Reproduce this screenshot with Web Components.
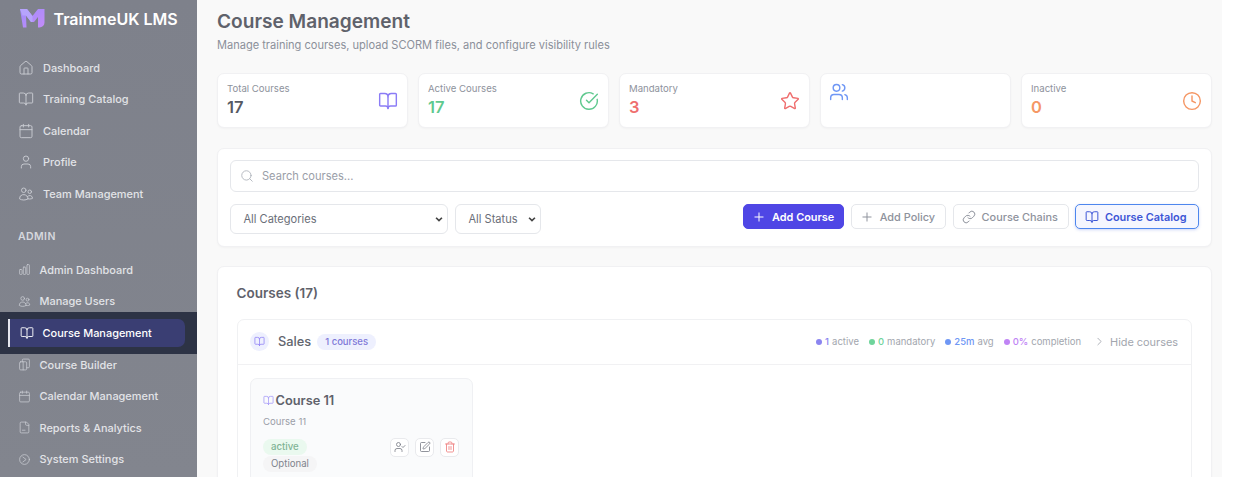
<!DOCTYPE html>
<html lang="en">
<head>
<meta charset="utf-8">
<title>Course Management</title>
<style>
html,body{margin:0;height:477px;overflow:hidden;background:#fff;font-family:Inter,"Liberation Sans",sans-serif;}
</style>
</head>
<body>
<lms-app>
  <lms-sidebar slot="side">
    <lms-nav icon="house">Dashboard</lms-nav>
    <lms-nav icon="book">Training Catalog</lms-nav>
    <lms-nav icon="calendar">Calendar</lms-nav>
    <lms-nav icon="user">Profile</lms-nav>
    <lms-nav icon="husers">Team Management</lms-nav>
    <lms-nav-head>ADMIN</lms-nav-head>
    <lms-nav sub icon="chart">Admin Dashboard</lms-nav>
    <lms-nav sub icon="husers">Manage Users</lms-nav>
    <lms-nav sub active icon="book">Course Management</lms-nav>
    <lms-nav sub icon="copy">Course Builder</lms-nav>
    <lms-nav sub icon="calendar">Calendar Management</lms-nav>
    <lms-nav sub icon="file">Reports &amp; Analytics</lms-nav>
    <lms-nav sub icon="gear">System Settings</lms-nav>
  </lms-sidebar>
  <lms-page slot="main" heading="Course Management" sub="Manage training courses, upload SCORM files, and configure visibility rules">
    <lms-stats>
      <lms-stat label="Total Courses" value="17" icon="book" color="#8b7cf6" vcolor="#565963"></lms-stat>
      <lms-stat label="Active Courses" value="17" icon="check" color="#5fc98f" vcolor="#5fc98f"></lms-stat>
      <lms-stat label="Mandatory" value="3" icon="star" color="#ef6f6f" vcolor="#ef6f6f"></lms-stat>
      <lms-stat top icon="users" color="#6f97f5"></lms-stat>
      <lms-stat label="Inactive" value="0" icon="clock" color="#f59765" vcolor="#f59765"></lms-stat>
    </lms-stats>
    <lms-filters>
      <lms-button slot="actions" variant="primary" icon="plus">Add Course</lms-button>
      <lms-button slot="actions" icon="plus">Add Policy</lms-button>
      <lms-button slot="actions" icon="link">Course Chains</lms-button>
      <lms-button slot="actions" variant="focus" icon="book">Course Catalog</lms-button>
    </lms-filters>
    <lms-courses heading="Courses (17)">
      <lms-group name="Sales" count="1 courses">
        <lms-course name="Course 11" desc="Course 11"></lms-course>
      </lms-group>
    </lms-courses>
  </lms-page>
</lms-app>
<script>
const ICONS={
 house:'<path d="M15 21v-8a1 1 0 0 0-1-1h-4a1 1 0 0 0-1 1v8"/><path d="M3 10a2 2 0 0 1 .709-1.528l7-5.999a2 2 0 0 1 2.582 0l7 5.999A2 2 0 0 1 21 10v9a2 2 0 0 1-2 2H5a2 2 0 0 1-2-2z"/>',
 book:'<path d="M12 7v14"/><path d="M3 18a1 1 0 0 1-1-1V4a1 1 0 0 1 1-1h5a4 4 0 0 1 4 4 4 4 0 0 1 4-4h5a1 1 0 0 1 1 1v13a1 1 0 0 1-1 1h-6a3 3 0 0 0-3 3 3 3 0 0 0-3-3z"/>',
 calendar:'<path d="M8 2v4"/><path d="M16 2v4"/><rect width="18" height="18" x="3" y="4" rx="2"/><path d="M3 10h18"/>',
 user:'<path d="M19 21v-2a4 4 0 0 0-4-4H9a4 4 0 0 0-4 4v2"/><circle cx="12" cy="7" r="4"/>',
 users:'<path d="M16 21v-2a4 4 0 0 0-4-4H6a4 4 0 0 0-4 4v2"/><circle cx="9" cy="7" r="4"/><path d="M22 21v-2a4 4 0 0 0-3-3.87"/><path d="M16 3.13a4 4 0 0 1 0 7.75"/>',
 husers:'<path d="M15 19.128a9.38 9.38 0 0 0 2.625.372 9.337 9.337 0 0 0 4.121-.952 4.125 4.125 0 0 0-7.533-2.493M15 19.128v-.003c0-1.113-.285-2.16-.786-3.070M15 19.128v.106A12.318 12.318 0 0 1 8.624 21c-2.331 0-4.512-.645-6.374-1.766l-.001-.109a6.375 6.375 0 0 1 11.964-3.070M12 6.375a3.375 3.375 0 1 1-6.750 0 3.375 3.375 0 0 1 6.750 0zm8.250 2.250a2.625 2.625 0 1 1-5.250 0 2.625 2.625 0 0 1 5.250 0z"/>',
 chart:'<rect x="3" y="12" width="4.5" height="9" rx="1.1"/><rect x="9.75" y="7.5" width="4.5" height="13.5" rx="1.1"/><rect x="16.5" y="3" width="4.5" height="18" rx="1.1"/>',
 copy:'<rect x="3" y="7" width="13" height="15" rx="2"/><path d="M8 7V4a2 2 0 0 1 2-2h9a2 2 0 0 1 2 2v12a2 2 0 0 1-2 2h-3"/><path d="M9.500 7v15"/>',
 file:'<path d="M15 2H6a2 2 0 0 0-2 2v16a2 2 0 0 0 2 2h12a2 2 0 0 0 2-2V7z"/><path d="M14 2v4a2 2 0 0 0 2 2h4"/><path d="M8 17h5"/>',
 gear:'<circle cx="12" cy="12" r="9"/><path d="M9 7.500l6 4.500-6 4.500"/>',
 check:'<path d="M21.801 10A10 10 0 1 1 17 3.335"/><path d="m9 11 3 3L22 4"/>',
 star:'<path d="M11.525 2.295a.53.53 0 0 1 .95 0l2.31 4.679a2.123 2.123 0 0 0 1.595 1.16l5.166.756a.53.53 0 0 1 .294.904l-3.736 3.638a2.123 2.123 0 0 0-.611 1.878l.882 5.14a.53.53 0 0 1-.771.56l-4.618-2.428a2.122 2.122 0 0 0-1.973 0L6.396 21.01a.53.53 0 0 1-.77-.56l.881-5.139a2.122 2.122 0 0 0-.611-1.879L2.16 9.795a.53.53 0 0 1 .294-.906l5.165-.755a2.122 2.122 0 0 0 1.597-1.16z"/>',
 clock:'<circle cx="12" cy="12" r="10"/><path d="M12 6v6l4 2"/>',
 search:'<circle cx="11" cy="11" r="8"/><path d="m21 21-4.300-4.300"/>',
 plus:'<path d="M5 12h14"/><path d="M12 5v14"/>',
 link:'<path d="M10 13a5 5 0 0 0 7.540.540l3-3a5 5 0 0 0-7.070-7.070l-1.720 1.710"/><path d="M14 11a5 5 0 0 0-7.540-.540l-3 3a5 5 0 0 0 7.070 7.070l1.710-1.710"/>',
 chevron:'<path d="m9 18 6-6-6-6"/>',
 usercheck:'<path d="M16 21v-2a4 4 0 0 0-4-4H6a4 4 0 0 0-4 4v2"/><circle cx="9" cy="7" r="4"/><path d="m16 11 2 2 4-4"/>',
 edit:'<path d="M12 3H5a2 2 0 0 0-2 2v14a2 2 0 0 0 2 2h14a2 2 0 0 0 2-2v-7"/><path d="M18.375 2.625a1 1 0 0 1 3 3l-9.013 9.014a2 2 0 0 1-.853.505l-2.873.84a.5.5 0 0 1-.62-.62l.84-2.873a2 2 0 0 1 .506-.852z"/>',
 trash:'<path d="M3 6h18"/><path d="M19 6v14c0 1-1 2-2 2H7c-1 0-2-1-2-2V6"/><path d="M8 6V4c0-1 1-2 2-2h4c1 0 2 1 2 2v2"/><path d="M10 11v6"/><path d="M14 11v6"/>'
};
function def(name,css,html){
  customElements.define(name,class extends HTMLElement{
    connectedCallback(){
      if(this.shadowRoot)return;
      const r=this.attachShadow({mode:'open'});
      const a=n=>this.getAttribute(n)||'';
      r.innerHTML='<style>'+css+'</style>'+(typeof html==='function'?html(a,this):html);
    }
  });
}
const ico=(n,s,c,w)=>`<svg width="${s}" height="${s}" viewBox="0 0 24 24" fill="none" stroke="${c||'currentColor'}" stroke-width="${w||2}" stroke-linecap="round" stroke-linejoin="round" style="flex:none;display:block">${ICONS[n]}</svg>`;

def('lms-app',`:host{display:grid;grid-template-columns:197px 1025px;height:477px;overflow:hidden}`,
 `<slot name="side"></slot><slot name="main"></slot>`);

def('lms-sidebar',`
 :host{display:block;background:linear-gradient(180deg,#7e818b,#82858e);height:477px;overflow:hidden;color:#d9dbe0}
 .brand{display:flex;align-items:center;gap:9px;height:37px;padding-left:19.500px;box-sizing:border-box}
 .brand b{font-size:16px;font-weight:600;color:#fff;letter-spacing:0}
 nav{display:flex;flex-direction:column;padding-top:14.900px}
`,`<div class="brand">
   <svg width="25" height="19" viewBox="0 0 25 19" style="flex:none;display:block">
     <defs><linearGradient id="g" x1="0" y1="0" x2="1" y2="1"><stop offset="0" stop-color="#9f8cfb"/><stop offset="1" stop-color="#c48cf8"/></linearGradient></defs>
     <path d="M0 0h7l5.500 7 5.500-7h6.500v13.500a5 5 0 0 1-5 5h-1.500V8l-4 5h-3L6 6.500l.5 12H3z" fill="url(#g)"/>
     <path d="M0 0h7l5.500 7v6h-1.500L6 6.500H2.500z" fill="#b6a4fc"/>
   </svg>
   <b>TrainmeUK LMS</b></div><nav><slot></slot></nav>`);

def('lms-nav-head',`:host{display:flex;align-items:center;height:44.200px;padding:8.500px 0 0 18px;box-sizing:border-box;font-size:10.500px;font-weight:600;letter-spacing:.4px;color:#d6d8de}`,`<slot></slot>`);

def('lms-nav',`
 :host{display:flex;align-items:center;height:31.600px;font-size:10.950px;font-weight:500;color:#e2e3e7;box-sizing:border-box;padding-left:17.500px;gap:9.500px}
 :host([sub]){gap:8px}
 :host([sub]) .i{width:14px;display:flex;justify-content:center}
 :host([active]){background:#2d3345;color:#fff;padding:0 12px 0 8px;height:42px;margin:-5.200px 0;gap:0}
 .pill{flex:1;height:28px;background:#3a3e73;border-radius:0 7px 7px 0;border-left:2.500px solid #e4e6ee;display:flex;align-items:center;gap:8.500px;padding-left:10px;box-sizing:border-box}
`,(a,el)=>{
  if(el.hasAttribute('active')) return `<div class="pill">${ico(a('icon'),14,'#f0f1f6',1.7)}<slot></slot></div>`;
  return `<span class="i">${ico(a('icon'),el.hasAttribute('sub')?13:16,'#c9cbd2',1.4)}</span><slot></slot>`;
});

def('lms-page',`
 :host{display:block;background:#f9f9f9;height:477px;overflow:hidden;padding:0 10px 0 20px;box-sizing:border-box}
 h1{margin:8px 0 0;font-size:19.100px;line-height:26px;font-weight:600;color:#5f626b}
 p{margin:3px 0 20px;font-size:11.050px;line-height:16px;color:#8b909a}
`,(a)=>`<h1>${a('heading')}</h1><p>${a('sub')}</p><slot></slot>`);

def('lms-stats',`:host{display:grid;grid-template-columns:repeat(5,1fr);gap:10px;margin-bottom:20px}`,`<slot></slot>`);

def('lms-stat',`
 :host{display:flex;justify-content:space-between;align-items:center;height:55px;box-sizing:border-box;background:#fff;border:1px solid #f1f1f3;border-radius:7px;padding:0 9px 0 9px;box-shadow:0 1px 2px rgba(0,0,0,.03)}
 :host([top]){align-items:flex-start;padding-top:8px;padding-left:8px}
 .t{align-self:flex-start;padding-top:8px}
 .l{font-size:9.600px;line-height:14px;color:#8e929c}
 .v{font-size:16.500px;line-height:18px;margin-top:1.500px;font-weight:600}
`,(a,el)=>el.hasAttribute('top')?ico(a('icon'),20,a('color'),1.7):`<div class="t"><div class="l">${a('label')}</div><div class="v" style="color:${a('vcolor')}">${a('value')}</div></div>${ico(a('icon'),20,a('color'),1.7)}`);

def('lms-filters',`
 :host{display:block;height:99px;box-sizing:border-box;background:#fff;border:1px solid #f1f1f3;border-radius:7px;padding:11px 12px 0;margin-bottom:19px;box-shadow:0 1px 2px rgba(0,0,0,.03)}
 .search{display:flex;align-items:center;gap:8px;height:32px;box-sizing:border-box;border:1px solid #e5e7eb;border-radius:6px;padding-left:9px;font-size:11.100px;color:#9a9ea8}
 .row{display:flex;justify-content:space-between;align-items:center;margin-top:12px;height:30px}
 .sel,.act{display:flex;align-items:center;gap:7px}
 .sel span{display:flex;align-items:center;justify-content:space-between;height:30px;box-sizing:border-box;border:1px solid #e5e7eb;border-radius:6px;padding:0 3px 0 12.500px;font-size:11.050px;color:#6a6e78;background:#fff}
 .a{width:218px}.b{width:86px}
 .act{gap:6.500px;margin-top:-5px}
`,`<div class="search">${ico('search',14,'#aeb2ba',1.5)}<span>Search courses...</span></div>
 <div class="row"><div class="sel">
   <span class="a">All Categories<svg width="10" height="10" viewBox="0 0 24 24" fill="none" stroke="#444" stroke-width="4"><path d="m5 9 7 7 7-7"/></svg></span>
   <span class="b">All Status<svg width="10" height="10" viewBox="0 0 24 24" fill="none" stroke="#444" stroke-width="4"><path d="m5 9 7 7 7-7"/></svg></span>
 </div><div class="act"><slot name="actions"></slot></div></div>`);

def('lms-button',`
 :host{display:inline-flex;align-items:center;gap:6px;height:25.500px;box-sizing:border-box;padding:0 10px 0 8px;border:1px solid #e5e7eb;border-radius:5px;background:#fff;color:#8e929c;font-size:10.900px;font-weight:500;white-space:nowrap}
 :host([variant=primary]){background:#4f46e5;border-color:#4f46e5;color:#fff;font-weight:600;padding:0 9px 0 8px}
 :host([variant=focus]){background:#f5f6fe;border:1.500px solid #4d86ee;color:#3c55d6;font-weight:600;padding:0 11.500px 0 8.500px;box-shadow:0 1px 3px rgba(60,90,220,.25)}
`,(a)=>`${ico(a('icon'),14,'currentColor',1.7)}<slot></slot>`);

def('lms-courses',`
 :host{display:block;background:#fff;border:1px solid #f1f1f3;border-radius:7px;padding:15px 19px;height:300px;box-sizing:border-box;box-shadow:0 1px 2px rgba(0,0,0,.03)}
 h2{margin:-.5px 0 15.500px -.5px;font-size:13.500px;line-height:22px;font-weight:600;color:#5f626b}
`,(a)=>`<h2>${a('heading')}</h2><slot></slot>`);

def('lms-group',`
 :host{display:block;border:1px solid #f0f1f3;border-radius:7px;background:#fff}
 header{display:flex;align-items:center;height:44.500px;box-sizing:border-box;padding:0 13px 0 12px;border-bottom:1px solid #f1f1f3}
 .badge{width:19px;height:19px;border-radius:50%;background:#eef0fe;display:flex;align-items:center;justify-content:center;margin-right:9px}
 .n{font-size:12.800px;font-weight:500;color:#62656e;margin-right:6px}
 .c{font-size:9.500px;font-weight:500;color:#7f78d8;background:#eef0fe;border-radius:9px;padding:0 8px;line-height:16px}
 .stats{margin-left:auto;display:flex;gap:10px;font-size:9.500px;color:#a2a6ae;align-items:center}
 .stats span{display:flex;align-items:center;gap:3px}
 .stats i{width:6px;height:6px;border-radius:50%;display:block}
 .hide{display:flex;align-items:center;gap:4px;margin-left:12px;font-size:10.900px;color:#a2a6ae}
 .body{padding:13px 12px}
`,(a)=>`<header><div class="badge">${ico('book',11,'#8b7cf6',1.6)}</div><div class="n">${a('name')}</div><div class="c">${a('count')}</div>
  <div class="stats">
   <span><i style="background:#8b85f0"></i><b style="font-weight:500;color:#8b85f0">1</b> active</span>
   <span><i style="background:#6fd49b"></i><b style="font-weight:500;color:#6fd49b">0</b> mandatory</span>
   <span><i style="background:#6f97f5"></i><b style="font-weight:500;color:#6f97f5">25m</b> avg</span>
   <span><i style="background:#c084f5"></i><b style="font-weight:500;color:#c084f5">0%</b> completion</span>
  </div>
  <div class="hide">${ico('chevron',13,'#a2a6ae',1.6)}Hide courses</div></header><div class="body"><slot></slot></div>`);

def('lms-course',`
 :host{display:block;width:223px;height:140px;box-sizing:border-box;background:#fafbfc;border:1px solid #eff0f3;border-radius:7px;padding:13px 13px}
 .t{display:flex;align-items:center;gap:1.500px;font-size:12.800px;line-height:18px;font-weight:600;color:#5f626b;margin-left:-1px}
 .d{font-size:9.600px;line-height:14px;color:#9a9ea8;margin-top:5.500px;margin-left:-1px}
 .row{display:flex;justify-content:space-between;margin-top:9.500px;margin-left:-1px}
 .tags{display:flex;flex-direction:column;align-items:flex-start;gap:1.500px}
 .tag{font-size:9.650px;line-height:16px;padding:0 8px;border-radius:8px}
 .g{background:#eaf9ef;color:#7fb394;font-weight:500}
 .o{background:#f5f5f6;color:#80848d}
 .btns{display:flex;gap:6px;height:19px;margin-top:-1px}
 .btn{width:19px;height:19px;box-sizing:border-box;border:1px solid #e9eaed;border-radius:5px;background:#fff;display:flex;align-items:center;justify-content:center}
`,(a)=>`<div class="t">${ico('book',11,'#a094f8',1.6)}${a('name')}</div><div class="d">${a('desc')}</div>
 <div class="row"><div class="tags"><span class="tag g">active</span><span class="tag o">Optional</span></div>
 <div class="btns"><div class="btn">${ico('usercheck',12,'#7d818a',1.7)}</div><div class="btn">${ico('edit',12,'#7d818a',1.7)}</div><div class="btn">${ico('trash',12,'#ef7f7f',1.7)}</div></div></div>`);
</script>
</body>
</html>
